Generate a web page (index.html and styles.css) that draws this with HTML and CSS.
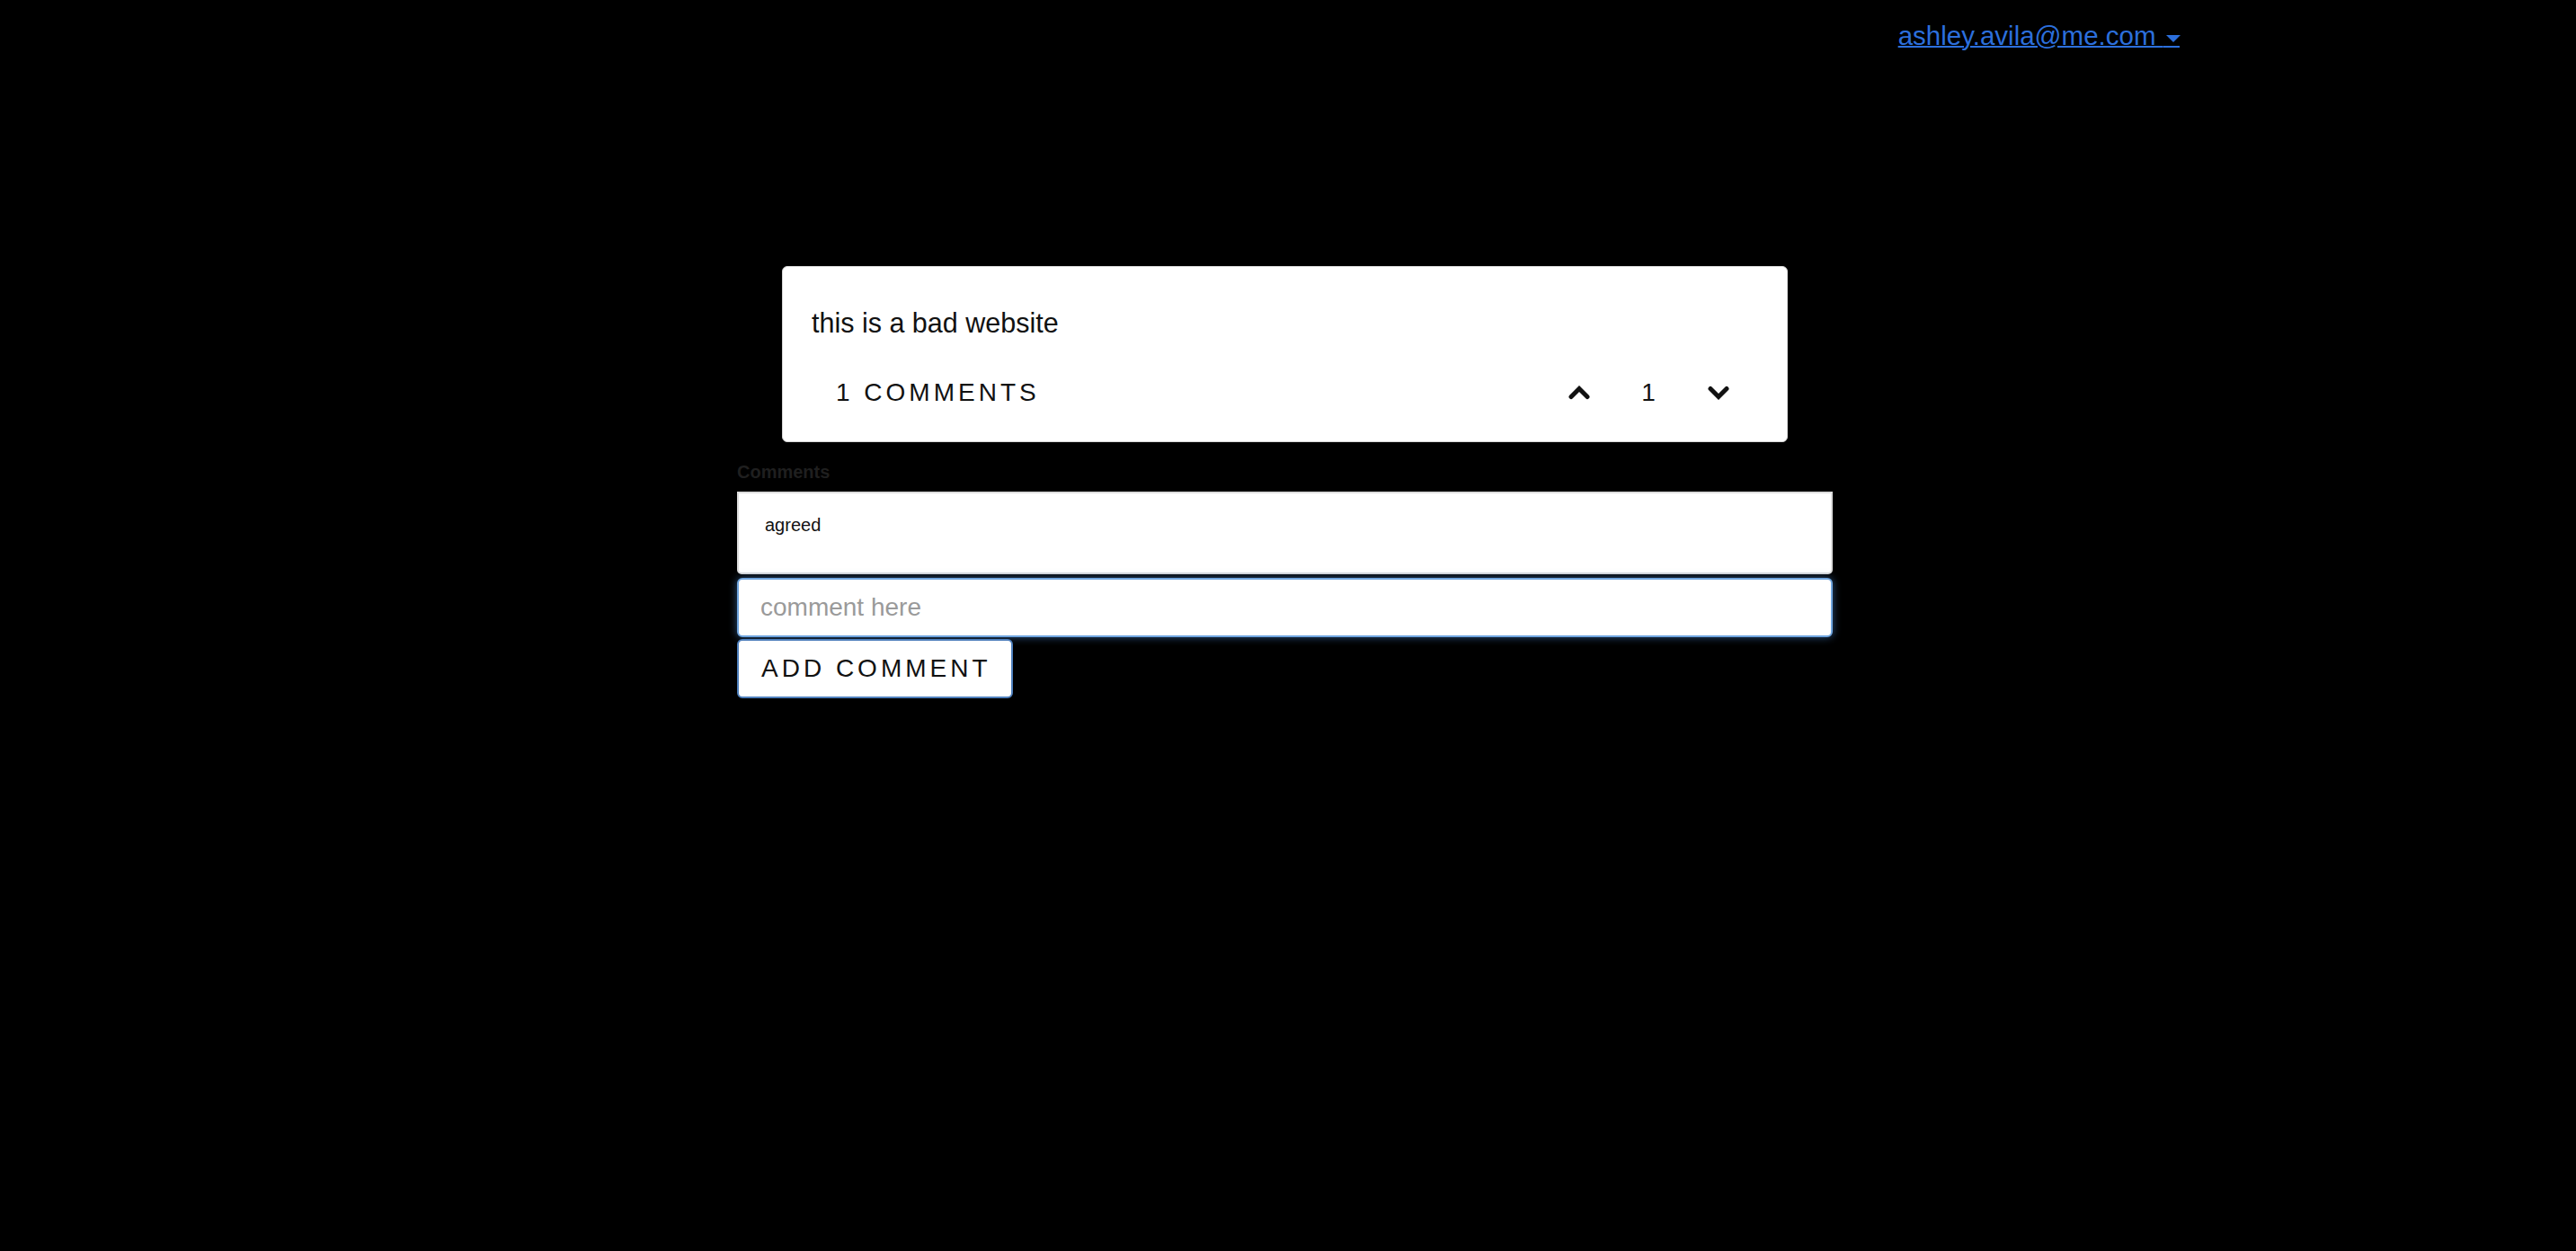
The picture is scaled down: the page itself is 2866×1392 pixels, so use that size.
FILE: index.html
```html
<!DOCTYPE html>
<html lang="en">
<head>
<meta charset="utf-8">
<title>Post</title>
<link rel="stylesheet" href="styles.css">
</head>
<body>
<header class="topbar">
  <a class="user-link" href="#">ashley.avila@me.com <span class="caret">&nbsp;&nbsp;&nbsp;</span></a>
</header>
<main class="page">
  <article class="post-card">
    <p class="post-title">this is a bad website</p>
    <div class="post-meta">
      <a class="comments-link" href="#">1 COMMENTS</a>
      <div class="votes">
        <svg class="vote-icon" width="26" height="16" viewBox="0 0 26 16"><polyline points="4,12.5 13,3.5 22,12.5" fill="none" stroke="#111" stroke-width="5" stroke-linecap="round" stroke-linejoin="miter"/></svg>
        <span class="vote-count">1</span>
        <svg class="vote-icon" width="26" height="16" viewBox="0 0 26 16"><polyline points="4,3.5 13,12.5 22,3.5" fill="none" stroke="#111" stroke-width="5" stroke-linecap="round" stroke-linejoin="miter"/></svg>
      </div>
    </div>
  </article>
  <section class="comments">
    <h4 class="comments-label">Comments</h4>
    <div class="comment-item">agreed</div>
    <form class="comment-form">
      <input class="comment-input" type="text" placeholder="comment here">
      <button class="add-btn" type="button">ADD COMMENT</button>
    </form>
  </section>
</main>
</body>
</html>
```
FILE: styles.css
```css
html, body {
  margin: 0;
  padding: 0;
  background: #000;
  font-family: "Liberation Sans", Arial, Helvetica, sans-serif;
}

.topbar {
  display: flex;
  justify-content: flex-end;
  padding: 23px 441px 0 0;
  height: 34px;
}

.user-link {
  font-size: 29.5px;
  line-height: 34px;
  color: #2c6fdc;
  text-decoration: underline;
  text-decoration-thickness: 2px;
}

.caret {
  position: relative;
  font-size: 22px;
}

.caret::after {
  content: "";
  position: absolute;
  left: 3px;
  top: 9px;
  border-left: 8px solid transparent;
  border-right: 8px solid transparent;
  border-top: 8px solid #2c6fdc;
}

.page {
  margin: 239px 0 0 820px;
  width: 1219px;
}

.post-card {
  box-sizing: border-box;
  width: 1119px;
  margin: 0 auto;
  background: #fff;
  border: 1px solid #d6d6d6;
  border-radius: 6px;
  padding: 46px 63px 38px 32px;
  color: #111;
}

.post-title {
  margin: 0 0 46px 0;
  font-size: 30.5px;
  line-height: 32px;
}

.post-meta {
  display: flex;
  justify-content: space-between;
  align-items: center;
  height: 32px;
}

.comments-link {
  padding-left: 27px;
  font-size: 28px;
  line-height: 32px;
  letter-spacing: 4px;
  color: #111;
  text-decoration: none;
}

.votes {
  display: flex;
  align-items: center;
}

.vote-icon {
  display: block;
}

.vote-count {
  width: 16px;
  margin: 0 57px 0 56px;
  text-align: center;
  font-size: 28px;
  line-height: 32px;
}

.comments-label {
  margin: 21px 0 10px 0;
  font-size: 20px;
  line-height: 24px;
  font-weight: bold;
  color: #1f1f1f;
}

.comment-item {
  background: #fff;
  border: 2px solid #dcdcdc;
  border-radius: 0 0 5px 5px;
  padding: 23px 29px 41px 29px;
  font-size: 20px;
  line-height: 24px;
  color: #111;
}

.comment-form {
  margin: 4px 0 0 0;
}

.comment-input {
  display: block;
  box-sizing: border-box;
  width: 100%;
  height: 66px;
  margin: 0;
  padding: 0 24px;
  border: 2px solid #6fa5df;
  border-radius: 6px;
  background: #fff;
  box-shadow: 0 0 10px rgba(80, 150, 230, 0.55);
  font-family: "Liberation Sans", Arial, sans-serif;
  font-size: 28px;
  color: #333;
  outline: none;
}

.comment-input::placeholder {
  color: #9a9a9a;
}

.add-btn {
  display: block;
  box-sizing: border-box;
  width: 307px;
  height: 66px;
  margin: 2px 0 0 0;
  padding: 0 0 0 25px;
  text-align: left;
  background: #fff;
  border: 2px solid #4e7fbc;
  border-radius: 6px;
  font-family: "Liberation Sans", Arial, sans-serif;
  font-size: 28px;
  letter-spacing: 4px;
  color: #111;
  cursor: pointer;
}
```
